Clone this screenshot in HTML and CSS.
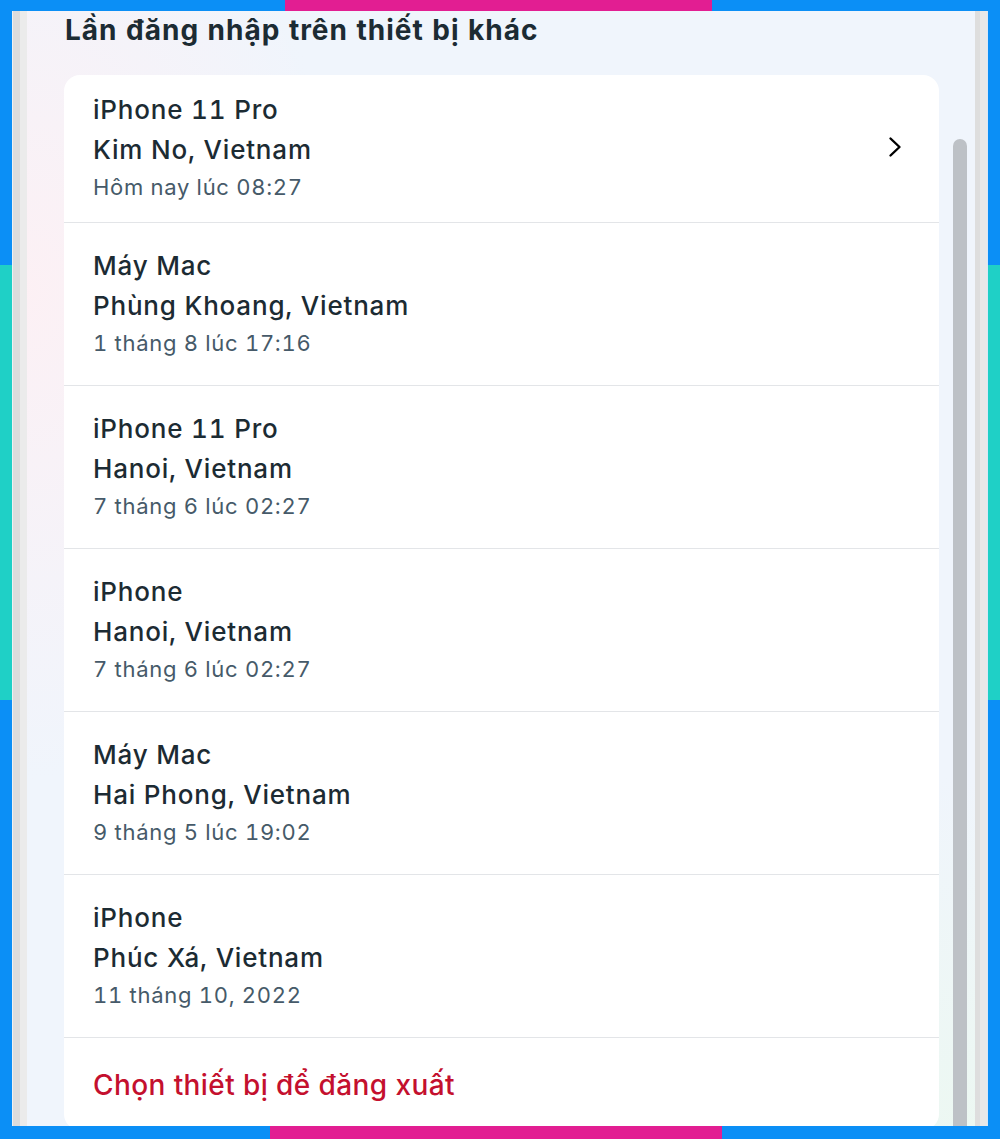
FILE: index.html
```html
<!DOCTYPE html>
<html lang="vi">
<head>
<meta charset="utf-8">
<title>Lần đăng nhập trên thiết bị khác</title>
<link rel="stylesheet" href="styles.css">
</head>
<body>
<div class="frame">
  <div class="window">
    <div class="edge-left"></div>
    <div class="panel">
      <div class="content">
        <h2 class="title">Lần đăng nhập trên thiết bị khác</h2>
        <div class="card">
          <div class="row row-first">
            <div class="info">
              <div class="device">iPhone 11 Pro</div>
              <div class="place">Kim No, Vietnam</div>
              <div class="time">Hôm nay lúc 08:27</div>
            </div>
            <svg class="chevron" width="16" height="22" viewBox="0 0 16 22"><path d="M3.5 2.5 L12.5 11 L3.5 19.5" fill="none" stroke="#000" stroke-width="2.4" stroke-linecap="round" stroke-linejoin="round"/></svg>
          </div>
          <div class="row">
            <div class="info">
              <div class="device">Máy Mac</div>
              <div class="place">Phùng Khoang, Vietnam</div>
              <div class="time">1 tháng 8 lúc 17:16</div>
            </div>
          </div>
          <div class="row">
            <div class="info">
              <div class="device">iPhone 11 Pro</div>
              <div class="place">Hanoi, Vietnam</div>
              <div class="time">7 tháng 6 lúc 02:27</div>
            </div>
          </div>
          <div class="row">
            <div class="info">
              <div class="device">iPhone</div>
              <div class="place">Hanoi, Vietnam</div>
              <div class="time">7 tháng 6 lúc 02:27</div>
            </div>
          </div>
          <div class="row">
            <div class="info">
              <div class="device">Máy Mac</div>
              <div class="place">Hai Phong, Vietnam</div>
              <div class="time">9 tháng 5 lúc 19:02</div>
            </div>
          </div>
          <div class="row">
            <div class="info">
              <div class="device">iPhone</div>
              <div class="place">Phúc Xá, Vietnam</div>
              <div class="time">11 tháng 10, 2022</div>
            </div>
          </div>
          <div class="row row-last">
            <div class="logout">Chọn thiết bị để đăng xuất</div>
          </div>
        </div>
      </div>
      <div class="scrolltrack"><div class="thumb"></div></div>
    </div>
    <div class="edge-right"></div>
  </div>
</div>
</body>
</html>
```
FILE: styles.css
```css
html, body {
  margin: 0;
  padding: 0;
  height: 100%;
}
body {
  font-family: Inter, "Noto Sans", "Liberation Sans", sans-serif;
  font-feature-settings: "tnum";
  background:
    linear-gradient(#e21e92, #e21e92) 285px 0 / 427px 11px no-repeat,
    linear-gradient(#e21e92, #e21e92) 270px 100% / 452px 13px no-repeat,
    linear-gradient(#1fd0c6, #1fd0c6) 0 265px / 12px 435px no-repeat,
    linear-gradient(#1fd0c6, #1fd0c6) 988px 265px / 12px 435px no-repeat,
    #0b8ff6;
}
.frame {
  box-sizing: border-box;
  height: 1139px;
  padding: 11px 12px 13px 12px;
}
.window {
  display: flex;
  height: 100%;
  overflow: hidden;
}
.edge-left {
  width: 15px;
  flex: none;
  background: linear-gradient(to right, #eef0f2 0 1px, #dcdcdc 1px 8px, #ebebeb 8px 15px);
}
.edge-right {
  width: 13px;
  flex: none;
  background: linear-gradient(to right, #dedede 0 5px, #e8e8e8 5px 12px, #d8e8f8 12px 13px);
}
.panel {
  flex: 1;
  display: flex;
  overflow: hidden;
  background:
    radial-gradient(ellipse 450px 700px at 0% 25%, rgba(253, 240, 244, 0.95), rgba(253, 240, 244, 0) 70%),
    radial-gradient(ellipse 700px 500px at 100% 100%, rgba(236, 248, 241, 0.9), rgba(236, 248, 241, 0) 70%),
    #f0f5fc;
}
.content {
  flex: 1;
  padding-left: 37px;
}
.title {
  margin: 0;
  padding: 2px 0 0 1px;
  height: 64px;
  box-sizing: border-box;
  font-size: 28px;
  line-height: 34px;
  font-weight: 700;
  color: #1c2b33;
  letter-spacing: 1px;
}
.card {
  background: #fff;
  border-radius: 16px;
  overflow: hidden;
}
.row {
  display: flex;
  align-items: center;
  padding: 23px 36px 25px 29px;
  border-bottom: 1px solid #e3e5e8;
}
.row-first {
  padding-top: 15px;
  padding-bottom: 18px;
}
.row-last {
  border-bottom: none;
  padding-top: 27px;
  padding-bottom: 25px;
}
.info {
  flex: 1;
}
.device, .place {
  font-size: 26px;
  line-height: 40px;
  font-weight: 500;
  letter-spacing: 0.8px;
  color: #1c2b33;
}
.time {
  font-size: 22px;
  line-height: 34px;
  letter-spacing: 0.7px;
  color: #465a69;
}
.logout {
  font-size: 28px;
  line-height: 40px;
  font-weight: 500;
  letter-spacing: 0.4px;
  color: #c4102e;
}
.chevron {
  flex: none;
  display: block;
}
.scrolltrack {
  width: 36px;
  flex: none;
  padding: 128px 8px 0 14px;
  box-sizing: border-box;
}
.thumb {
  width: 14px;
  height: 1100px;
  border-radius: 7px;
  background: #bdc1c6;
}
```
